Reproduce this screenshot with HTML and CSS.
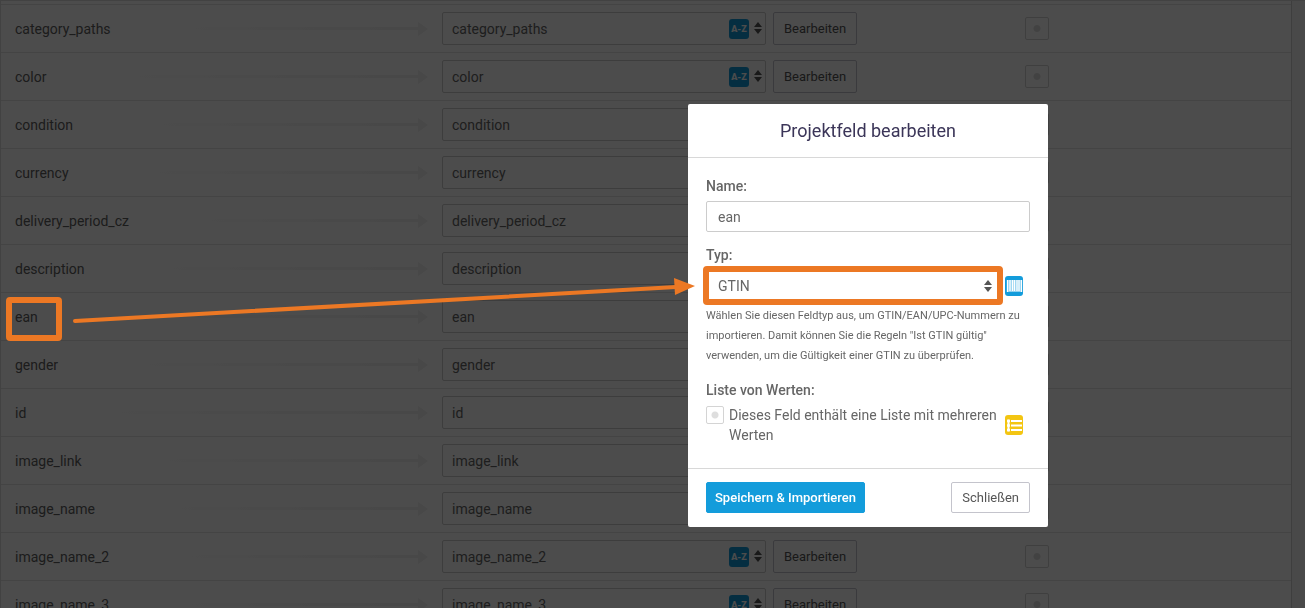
FILE: index.html
```
<!DOCTYPE html>
<html lang="de">
<head>
    <meta charset="UTF-8">
    <meta name="viewport" content="width=device-width, initial-scale=1.0">
    <title>Projektfeld bearbeiten</title>
    <link rel="stylesheet" href="styles.css">
</head>
<body>
    <div class="panel">
        <table class="mapping">
            <colgroup>
                <col class="col-source">
                <col class="col-field">
                <col class="col-check">
            </colgroup>
            <tbody id="rows"></tbody>
        </table>
    </div>

    <div class="overlay"></div>

    <div class="modal" role="dialog" aria-labelledby="modalTitle">
        <div class="modal-header">
            <h1 id="modalTitle">Projektfeld bearbeiten</h1>
        </div>
        <div class="modal-body">
            <div class="group">
                <label class="label" for="name">Name:</label>
                <input class="input" type="text" id="name" value="ean">
            </div>
            <div class="group">
                <label class="label" for="type">Typ:</label>
                <div class="type-row">
                    <div class="select-wrap">
                        <select class="input" id="type">
                            <option>GTIN</option>
                        </select>
                        <span class="caret"></span>
                    </div>
                    <svg class="icon" viewBox="0 0 18 20">
                        <rect width="18" height="20" rx="3" fill="#139cdb"/>
                        <rect x="2" y="4" width="15" height="12" fill="#8fd0ef"/>
                        <path d="M2.5 4v12M5 4v11M7.5 4v11M9.5 4v11M12 4v11M14 4v11M16.5 4v12" stroke="#fff" stroke-width="1.3"/>
                    </svg>
                </div>
                <p class="help">Wählen Sie diesen Feldtyp aus, um GTIN/EAN/UPC-Nummern zu importieren. Damit können Sie die Regeln "Ist GTIN gültig" verwenden, um die Gültigkeit einer GTIN zu überprüfen.</p>
            </div>
            <div class="group">
                <div class="label">Liste von Werten:</div>
                <div class="list-row">
                    <input class="check" type="checkbox" id="list">
                    <label class="list-label" for="list">Dieses Feld enthält eine Liste mit mehreren Werten</label>
                    <svg class="icon" viewBox="0 0 18 20">
                        <rect width="18" height="20" rx="3" fill="#f3c512"/>
                        <path d="M2 6h3M2 10.500h3M2 15h3" stroke="#fff" stroke-width="2.500"/>
                        <path d="M6 6h11M6 10.500h11M6 15h11" stroke="#fff" stroke-width="2"/>
                        <path d="M3.500 4.500v12" stroke="#fff" stroke-width="2"/>
                    </svg>
                </div>
            </div>
        </div>
        <div class="modal-footer">
            <button class="btn btn-primary" type="button">Speichern &amp; Importieren</button>
            <button class="btn" type="button">Schließen</button>
        </div>
    </div>

    <!-- highlights: field "ean" -> type GTIN -->
    <svg class="marks" aria-hidden="true">
        <rect x="9" y="300" width="50" height="38" rx="1"/>
        <rect x="706" y="269" width="294" height="33" rx="1"/>
        <path class="line" d="M75 321L676 287"/>
        <path class="head" d="M674 278L695 286L675 295Z"/>
    </svg>

    <script>
        const fields = [
            'category_paths', 'color', 'condition', 'currency', 'delivery_period_cz',
            'description', 'ean', 'gender', 'id', 'image_link',
            'image_name', 'image_name_2', 'image_name_3'
        ];

        document.getElementById('rows').innerHTML = fields.map(field => `
            <tr>
                <td>
                    <div class="source">
                        <span>${field}</span>
                        <span class="arrow"></span>
                    </div>
                </td>
                <td>
                    <div class="target">
                        <div class="select-wrap">
                            <select class="input" aria-label="${field}"><option>${field}</option></select>
                            <span class="badge">A-Z</span>
                            <span class="caret"></span>
                        </div>
                        <button class="btn" type="button">Bearbeiten</button>
                    </div>
                </td>
                <td><input class="check" type="checkbox" aria-label="${field}"></td>
            </tr>
        `).join('');
    </script>
</body>
</html>
```
FILE: styles.css
```
* {
    margin: 0;
    padding: 0;
    box-sizing: border-box;
    font-family: Roboto, Arial, sans-serif;
}

body {
    height: 100vh;
    overflow: hidden;
    background: #f6f6f6;
    border-top: 1px solid #dcdcdc;
    color: #666;
    font-size: 14px;
    line-height: 20px;
}

.panel {
    margin-right: 13px;
    padding-top: 3px;
    background: white;
    border-left: 1px solid #dcdcdc;
    border-right: 1px solid #cfcfcf;
}

.mapping {
    width: 100%;
    table-layout: fixed;
    border-collapse: separate;
    border-spacing: 0;
    border-top: 1px solid #e4e4e4;
}

.mapping td {
    height: 48px;
    border-bottom: 1px solid #e4e4e4;
    vertical-align: middle;
}

.mapping .check {
    display: block;
    width: 24px;
    height: 23px;
}

.col-source {
    width: 441px;
}

.col-field {
    width: 583px;
}

.source {
    display: flex;
    align-items: center;
    gap: 48px;
    padding: 0 14px;
    color: #606060;
}

.arrow {
    position: relative;
    flex: 1;
    height: 3px;
    margin-right: 10px;
    background: linear-gradient(to right, transparent, #f0f0f0);
}

.arrow::after {
    content: "";
    position: absolute;
    left: 100%;
    top: -5px;
    border: 7px solid transparent;
    border-left: 10px solid #f0f0f0;
    border-right: 0;
}

.target {
    display: flex;
    gap: 7px;
}

.target .select-wrap {
    flex: 0 0 324px;
}

.target .input,
.target .btn {
    height: 33px;
}

.target .input {
    padding: 0 9px;
}

.select-wrap {
    position: relative;
    flex: 1;
}

.input {
    display: block;
    width: 100%;
    height: 31px;
    padding: 0 11px;
    appearance: none;
    background: white;
    border: 1px solid #ccc;
    border-radius: 2px;
    color: #666;
    font-size: 14px;
}

/* up/down arrows of the select */
.caret {
    position: absolute;
    right: 4px;
    top: 50%;
    width: 8px;
    height: 12px;
    margin-top: -7px;
    pointer-events: none;
}

.caret::before,
.caret::after {
    content: "";
    position: absolute;
    left: 0;
    border: 4px solid transparent;
}

.caret::before {
    top: 0;
    border-top: 0;
    border-bottom: 5px solid #555;
}

.caret::after {
    bottom: 0;
    border-bottom: 0;
    border-top: 5px solid #555;
}

.badge {
    position: absolute;
    right: 17px;
    top: 7px;
    width: 20px;
    height: 20px;
    border-radius: 3px;
    background: #139cdb;
    color: white;
    font-size: 9px;
    font-weight: 900;
    line-height: 21px;
    text-align: center;
    pointer-events: none;
}

.btn {
    height: 31px;
    padding: 0 10px;
    background: white;
    border: 1px solid #c4c4cc;
    border-radius: 2px;
    color: #555;
    font-size: 13px;
    cursor: pointer;
}

.btn-primary {
    padding: 0 8px;
    background: #139cdb;
    border-color: #139cdb;
    color: white;
    font-weight: 500;
}

.check {
    flex: none;
    width: 18px;
    height: 18px;
    appearance: none;
    border: 1px solid #d4d4d4;
    border-radius: 2px;
    background: radial-gradient(circle, #dedede 3px, transparent 4px);
}

.overlay {
    position: fixed;
    inset: 0;
    background: rgba(0, 0, 0, 0.7);
}

.modal {
    position: absolute;
    left: 688px;
    top: 104px;
    width: 360px;
    background: white;
    border-radius: 2px;
}

.modal-header {
    padding: 17px 18px 16px;
    border-bottom: 1px solid #d8d8d8;
    text-align: center;
}

.modal-header h1 {
    color: #3b3558;
    font-size: 18px;
    font-weight: 400;
    line-height: 20px;
}

.modal-body {
    padding: 18px 18px 23px;
}

.group + .group {
    margin-top: 13px;
}

.label {
    display: block;
    margin-bottom: 5px;
    font-weight: 500;
}

.type-row {
    display: flex;
    align-items: center;
    gap: 5px;
    padding-right: 7px;
}

.type-row .caret {
    right: 8px;
    margin-top: -6px;
}

.icon {
    flex: none;
    width: 18px;
    height: 20px;
}

.help {
    padding: 5px 0 1px;
    font-size: 11px;
}

.list-row {
    display: flex;
    align-items: flex-start;
    gap: 5px;
    padding-right: 7px;
}

.list-row .check {
    margin-top: 1px;
}

.list-label {
    flex: 1;
}

.list-row .icon {
    align-self: center;
}

.modal-footer {
    display: flex;
    justify-content: space-between;
    padding: 13px 18px 14px;
    border-top: 1px solid #d8d8d8;
}

.marks {
    position: absolute;
    left: 0;
    top: 0;
    width: 100%;
    height: 100%;
    fill: none;
    stroke: #ec7824;
    stroke-width: 6;
    pointer-events: none;
}

.marks .line {
    stroke-width: 4;
    stroke-linecap: round;
}

.marks .head {
    fill: #ec7824;
    stroke: none;
}
```
